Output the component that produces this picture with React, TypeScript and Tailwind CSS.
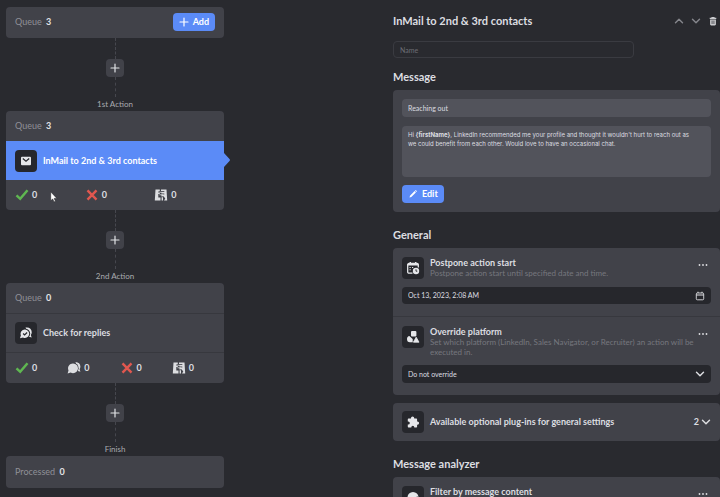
import React, { useState } from 'react';

type IconProps = { className?: string };

const PlusIcon = ({ className }: IconProps) => (
  <svg className={className} viewBox="0 0 10 10" fill="none" stroke="currentColor" strokeWidth="1.2" strokeLinecap="round">
    <path d="M5 1v8M1 5h8" />
  </svg>
);

const ChevronIcon = ({ className }: IconProps) => (
  <svg className={className} viewBox="0 0 10 10" fill="none" stroke="currentColor" strokeWidth="1.4" strokeLinecap="round" strokeLinejoin="round">
    <path d="M1.5 3.2 5 6.8l3.5-3.6" />
  </svg>
);

const TrashIcon = ({ className }: IconProps) => (
  <svg className={className} viewBox="0 0 10 10" fill="currentColor">
    <path d="M3.6 1h2.8l.4.8h1.5v1.1H1.7V1.8h1.5z" />
    <path fillRule="evenodd" d="M2.1 3.4h5.8v4.9c0 .7-.4 1.1-1.1 1.1H3.2c-.7 0-1.1-.4-1.1-1.1zM3.7 4.6v3.4h.7V4.6zm1.9 0v3.400h.7V4.600z" />
  </svg>
);

const MailIcon = ({ className }: IconProps) => (
  <svg className={className} viewBox="0 0 12 12">
    <rect x="1" y="1.7" width="10" height="8.6" rx="1" fill="#e6e7ea" />
    <path d="M2.8 3.6 6 6.2l3.2-2.6" fill="none" stroke="#26272c" strokeWidth="1.3" />
  </svg>
);

const RepliesIcon = ({ className }: IconProps) => (
  <svg className={className} viewBox="0 0 14 14">
    <path d="M6.5 1.6c3.6-.7 6.2 1.4 6.2 4.5 0 1.3-.3 2.1-.9 2.9l.9 2.5-2.6-.7" fill="#e6e7ea" />
    <circle cx="6" cy="7.6" r="5.2" fill="#26272c" />
    <path d="M6 3.5a4.2 4.2 0 1 1-2 7.9l-3 .8.9-2.900A4.200 4.200 0 0 1 6 3.500z" fill="#e6e7ea" />
    <path d="m4.1 7.500 1.500 1.500 2.500-2.500" fill="none" stroke="#26272c" strokeWidth="1.2" />
  </svg>
);

const ChatIcon = ({ className }: IconProps) => (
  <svg className={className} viewBox="0 0 14 14">
    <path d="M8.5 1c2.9.1 4.9 1.9 4.9 4.6 0 1.2-.3 2-.8 2.7l.8 2.4-2.5-.6z" fill="#dddee1" />
    <circle cx="6" cy="7.2" r="5.6" fill="#414249" />
    <path d="M6 2.4a4.9 4.9 0 1 1-2.3 9.2l-3.1 1 .9-3.200A4.900 4.900 0 0 1 6 2.400z" fill="#dddee1" />
  </svg>
);

const CheckIcon = ({ className }: IconProps) => (
  <svg className={className} viewBox="0 0 14 14" fill="none" stroke="#5fb751" strokeWidth="2.5">
    <path d="m1.5 7.3 3.7 3.5 7.3-8.6" />
  </svg>
);

const CrossIcon = ({ className }: IconProps) => (
  <svg className={className} viewBox="0 0 14 14" fill="none" stroke="#e0574f" strokeWidth="2.4">
    <path d="m2.5 2.3 9 9.4M11.5 2.3l-9 9.4" />
  </svg>
);

const ExcludedIcon = ({ className }: IconProps) => (
  <svg className={className} viewBox="0 0 14 14">
    <path d="M1.5 1.5h4.300v1.700H4.500v1.500h1.300v1.400H4.300v3.500h2.200v2.900H.8z" fill="#dddee1" />
    <path d="M7 1.500h5.500l.7 11H10l1.300-1.900-1.800-2.400-2.100.2V6.600h2.900V5.500H7.400V4h2.900V2.900H7z" fill="#dddee1" />
    <path d="M5.400 4.300h5M5.400 6.800h4" stroke="#dddee1" strokeWidth=".8" />
    <path d="M8.300 9.300v3.200" stroke="#dddee1" strokeWidth="1.4" />
  </svg>
);

const ScheduleIcon = ({ className }: IconProps) => (
  <svg className={className} viewBox="0 0 14 14">
    <path d="M6.5 12.2H3c-.8 0-1.300-.5-1.300-1.300V3.800c0-.8.5-1.300 1.300-1.300h8c.8 0 1.300.5 1.300 1.300v2.700" fill="none" stroke="#e6e7ea" strokeWidth="1.3" />
    <path d="M1.5 3h11v1.500h-11z" fill="#e6e7ea" />
    <path d="M4.3 1v2.500M9.7 1v2.500" stroke="#e6e7ea" strokeWidth="1.4" />
    <path d="M3.5 6.500h1.200M3.500 8.700h1.200M6 6.500h1.200" stroke="#e6e7ea" strokeWidth="1.1" />
    <circle cx="10" cy="10" r="3.2" fill="#e6e7ea" />
    <path d="M10 8.300v1.900h1.300" fill="none" stroke="#26272c" strokeWidth=".9" />
  </svg>
);

const PlatformIcon = ({ className }: IconProps) => (
  <svg className={className} viewBox="0 0 14 14" fill="#e6e7ea">
    <rect x="5" y="1" width="5.4" height="5.4" rx="1" />
    <path d="M1 9c0-1.500 1-2.700 2.300-2.900l3.400 3v3.200H4A3.200 3.200 0 0 1 1 9z" />
    <path d="m10.2 7.200 2.800 5H7.400z" stroke="#e6e7ea" strokeWidth=".8" strokeLinejoin="round" />
  </svg>
);

const PuzzleIcon = ({ className }: IconProps) => (
  <svg className={className} viewBox="0 0 14 14" fill="#e6e7ea">
    <path d="M5 3.600V3a1.600 1.600 0 0 1 3.200 0v.6h1.900c.6 0 1 .4 1 1v1.900h.4a1.600 1.600 0 0 1 0 3.200h-.4v1.900c0 .6-.4 1-1 1H8.300v-.4a1.500 1.500 0 0 0-3 0v.4H2.800c-.6 0-1-.4-1-1V9.500h.5a1.500 1.500 0 0 0 0-3h-.5V4.600c0-.6.4-1 1-1z" />
  </svg>
);

const FilterIcon = ({ className }: IconProps) => (
  <svg className={className} viewBox="0 0 14 14">
    <circle cx="7" cy="7.5" r="5.5" fill="#e6e7ea" />
    <path d="M7.500 8.500 12 7" stroke="#26272c" strokeWidth="1.3" />
  </svg>
);

const CalendarIcon = ({ className }: IconProps) => (
  <svg className={className} viewBox="0 0 10 10" fill="none" stroke="currentColor">
    <rect x="1.3" y="2" width="7.4" height="6.8" rx="1" strokeWidth=".9" />
    <path d="M1.3 4h7.400M3 .8V2M7 .8V2" strokeWidth="1.1" />
  </svg>
);

const PencilIcon = ({ className }: IconProps) => (
  <svg className={className} viewBox="0 0 10 10" fill="currentColor">
    <path d="m1.5 8.500.5-1.800 4.600-4.600 1.300 1.300L3.300 8zM7 1.700l.7-.7L9 2.300l-.7.700z" />
  </svg>
);

const DotsIcon = ({ className }: IconProps) => (
  <svg className={className} viewBox="0 0 10 4" fill="currentColor">
    <circle cx="1.5" cy="2" r="0.9" />
    <circle cx="5" cy="2" r="0.9" />
    <circle cx="8.5" cy="2" r="0.9" />
  </svg>
);

interface CountRowProps {
  label: string;
  value: number;
  children?: React.ReactNode;
}

const CountRow = ({ label, value, children }: CountRowProps) => (
  <div className="flex h-[30px] items-center justify-between px-[9px]">
    <p className="text-[9px] text-[#8f9097]">
      {label} <span className="ml-0.5 font-bold text-[#e2e3e6]">{value}</span>
    </p>
    {children}
  </div>
);

const Connector = ({ label }: { label: string }) => (
  <div className="flex h-[73px] flex-col items-center">
    <span className="h-[21px] border-l border-dashed border-[#46474e]" />
    <button aria-label="Insert action" className="flex size-[18px] items-center justify-center rounded bg-[#414249] text-[#e2e3e6]">
      <PlusIcon className="size-2.5" />
    </button>
    <span className="h-5 border-l border-dashed border-[#46474e]" />
    <span className="text-[8px] leading-[14px] text-[#a9aab0]">{label}</span>
  </div>
);

const IconBox = ({ children }: { children: React.ReactNode }) => (
  <span className="flex size-[22px] shrink-0 items-center justify-center rounded bg-[#26272c]">{children}</span>
);

interface Stat {
  name: string;
  value: number;
  Icon: (props: IconProps) => React.ReactElement;
}

const success: Stat = { name: 'Successful', value: 0, Icon: CheckIcon };
const replied: Stat = { name: 'Replied', value: 0, Icon: ChatIcon };
const failed: Stat = { name: 'Failed', value: 0, Icon: CrossIcon };
const excluded: Stat = { name: 'Excluded', value: 0, Icon: ExcludedIcon };

const Stats = ({ items }: { items: Stat[] }) => (
  <ul className="flex h-[30px] items-center pl-[9px]">
    {items.map(({ name, value, Icon }) => (
      <li key={name} title={name} className="flex flex-1 items-center gap-[3px] text-[9px] font-bold text-[#dddee1]">
        <Icon className="size-3.5" />
        {value}
      </li>
    ))}
  </ul>
);

interface SettingProps {
  icon: React.ReactNode;
  title: string;
  description?: string;
  children?: React.ReactNode;
}

const Setting = ({ icon, title, description, children }: SettingProps) => (
  <div className="px-[9px] pt-[9px]">
    <div className="flex">
      <IconBox>{icon}</IconBox>
      <div className="min-w-0 flex-1 pl-1.5">
        <h3 className="text-[9px] leading-[11px] font-bold">{title}</h3>
        {description && <p className="text-[8px] leading-[10px] text-[#76777e]">{description}</p>}
      </div>
      <button aria-label={`${title} options`} className="mt-1.5 mr-[3px] h-1 w-2.5 text-[#dddee1]">
        <DotsIcon className="h-1 w-2.5" />
      </button>
    </div>
    {children}
  </div>
);

export default function App() {
  const [name, setName] = useState('');
  const [date, setDate] = useState('Oct 13, 2023, 2:08 AM');

  return (
    <div className="relative flex h-screen overflow-hidden bg-[#292a2f] font-['Lato',sans-serif] text-[#dddee1]">
      <main className="w-[393px] shrink-0 pt-[7px] pl-1.5">
        <div className="w-[218px]">
          <section className="rounded bg-[#414249] pb-px">
            <CountRow label="Queue" value={3}>
              <button className="flex h-[18px] items-center gap-1 rounded bg-[#5b8bf7] px-1.5 text-[9px] font-bold text-white">
                <PlusIcon className="size-2.5" />
                Add
              </button>
            </CountRow>
          </section>

          <Connector label="1st Action" />

          <section className="rounded bg-[#414249]">
            <CountRow label="Queue" value={3} />
            <div className="relative flex h-[39px] items-center gap-1.5 bg-[#5b8bf7] px-[9px] text-[9px] font-bold text-white">
              <IconBox>
                <MailIcon className="size-3" />
              </IconBox>
              InMail to 2nd &amp; 3rd contacts
              <svg className="absolute top-3 left-full h-3.5 w-1.5" viewBox="0 0 6 14" fill="#5b8bf7">
                <path d="M0 0l5.500 6c.6.6.6 1.400 0 2L0 14z" />
              </svg>
            </div>
            <Stats items={[success, failed, excluded]} />
          </section>

          <Connector label="2nd Action" />

          <section className="rounded bg-[#414249]">
            <CountRow label="Queue" value={0} />
            <div className="flex h-10 items-center gap-1.5 border-y border-[#37383e] px-[9px] text-[9px] font-bold">
              <IconBox>
                <RepliesIcon className="size-3.5" />
              </IconBox>
              Check for replies
            </div>
            <Stats items={[success, replied, failed, excluded]} />
          </section>

          <Connector label="Finish" />

          <section className="rounded bg-[#414249] py-px">
            <CountRow label="Processed" value={0} />
          </section>
        </div>
      </main>

      <aside className="min-w-0 flex-1">
        <header className="flex h-[41px] items-center justify-between pt-px pr-0.5">
          <h1 className="text-[11px] font-bold">InMail to 2nd &amp; 3rd contacts</h1>
          <div className="flex items-center gap-[7px] text-[#85868c]">
            <button aria-label="Move up">
              <ChevronIcon className="size-2.5 rotate-180" />
            </button>
            <button aria-label="Move down">
              <ChevronIcon className="size-2.5" />
            </button>
            <button aria-label="Delete" className="text-[#c9cace]">
              <TrashIcon className="size-2.5" />
            </button>
          </div>
        </header>

        <input
          aria-label="Name"
          placeholder="Name"
          value={name}
          onChange={(e) => setName(e.target.value)}
          className="block h-[17px] w-[241px] rounded-sm border border-[#3a3b41] px-1.5 text-[7px] placeholder:text-[#6d6e75]"
        />

        <h2 className="mt-[11px] text-[11px] leading-4 font-bold">Message</h2>
        <section className="mt-[5px] rounded bg-[#414249] p-[9px]">
          <input aria-label="Subject" readOnly value="Reaching out" className="block h-[18px] w-full rounded-sm bg-[#52535b] px-1.5 text-[7px]" />
          <div
            role="textbox"
            aria-label="Message text"
            aria-readonly="true"
            aria-multiline="true"
            className="mt-[9px] h-[51px] rounded-sm bg-[#52535b] py-1 pr-4 pl-1.5 font-['Inter',sans-serif] text-[6px] leading-[9px]"
          >
            Hi <b>{'{firstName}'}</b>, LinkedIn recommended me your profile and thought it wouldn't hurt to reach out as we could benefit from each other. Would love to have an occasional chat.
          </div>
          <button className="mt-2 flex h-[18px] items-center gap-1 rounded bg-[#5b8bf7] px-1.5 text-[9px] font-bold text-white">
            <PencilIcon className="size-2.5" />
            Edit
          </button>
        </section>

        <h2 className="mt-[15px] text-[11px] leading-4 font-bold">General</h2>
        <section className="mt-[5px] rounded bg-[#414249] pb-3">
          <Setting icon={<ScheduleIcon className="size-3.5" />} title="Postpone action start" description="Postpone action start until specified date and time.">
            <div className="mt-2 flex h-[17px] items-center rounded-sm bg-[#26272c] px-1.5">
              <input aria-label="Start date" value={date} onChange={(e) => setDate(e.target.value)} className="min-w-0 flex-1 text-[7px]" />
              <button aria-label="Pick a date">
                <CalendarIcon className="size-2.5" />
              </button>
            </div>
          </Setting>
          <hr className="mt-3 border-[#37383e]" />
          <Setting
            icon={<PlatformIcon className="size-3.5" />}
            title="Override platform"
            description="Set which platform (LinkedIn, Sales Navigator, or Recruiter) an action will be executed in."
          >
            <div className="relative mt-2">
              <select aria-label="Platform" className="block h-[18px] w-full appearance-none rounded-sm bg-[#26272c] px-1.5 text-[7px]">
                <option>Do not override</option>
                <option>LinkedIn</option>
                <option>Sales Navigator</option>
                <option>Recruiter</option>
              </select>
              <ChevronIcon className="pointer-events-none absolute top-1 right-1.5 size-2.5" />
            </div>
          </Setting>
        </section>

        <button className="mt-2 flex h-[38px] w-full items-center gap-1.5 rounded bg-[#414249] px-[9px] text-[9px] font-bold">
          <IconBox>
            <PuzzleIcon className="size-3.5" />
          </IconBox>
          Available optional plug-ins for general settings
          <span className="ml-auto flex items-center gap-0.5">
            2
            <ChevronIcon className="size-2.5" />
          </span>
        </button>

        <h2 className="mt-[15px] text-[11px] leading-4 font-bold">Message analyzer</h2>
        <section className="mt-[5px] rounded bg-[#414249] pb-3">
          <Setting icon={<FilterIcon className="size-3.5" />} title="Filter by message content" />
        </section>
      </aside>

      {/* Mouse pointer over the stats row */}
      <svg className="pointer-events-none absolute top-[191px] left-[50px] h-3 w-2" viewBox="0 0 8 12" fill="#fff" stroke="#26272c" strokeWidth=".6">
        <path d="M.7.800v9l2-1.800 1.300 3 1.500-.7-1.300-2.900h2.700z" />
      </svg>
    </div>
  );
}
